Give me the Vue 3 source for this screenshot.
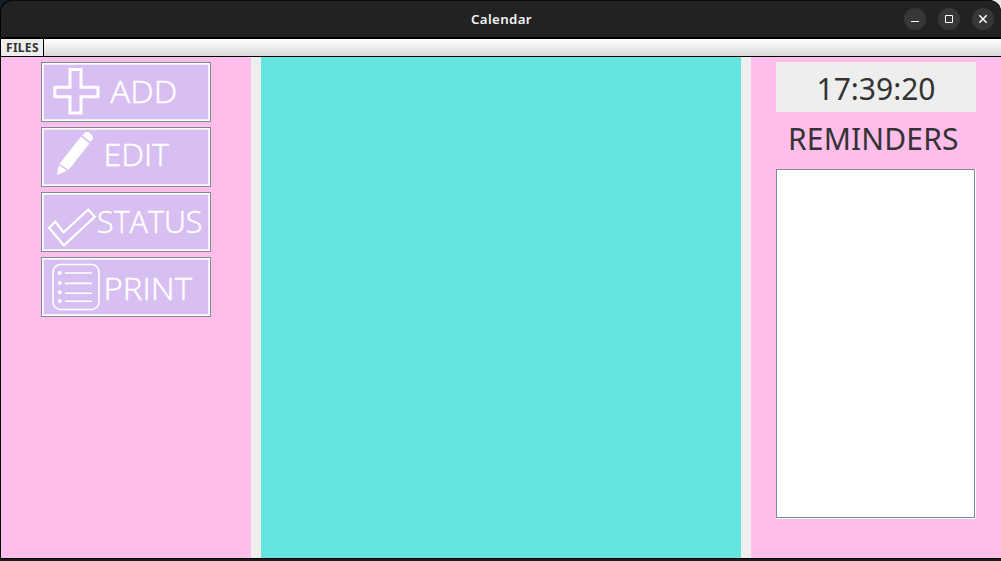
<script setup>
const buttons = [
  { name: 'add', label: 'ADD', x: 69.3, y: 40.5, width: 67 },
  { name: 'edit', label: 'EDIT', x: 62.5, y: 39, width: 65.5 },
  { name: 'status', label: 'STATUS', x: 56, y: 41, width: 105.5 },
  { name: 'print', label: 'PRINT', x: 62.5, y: 42.7, width: 88.5 },
]
</script>

<template>
  <div class="desktop">
    <div class="window">
      <header class="titlebar">
        <span class="side"></span>
        <h1>Calendar</h1>
        <div class="side controls">
          <span class="control"><svg viewBox="0 0 22 22"><path d="M7 13.5h8" /></svg></span>
          <span class="control"><svg viewBox="0 0 22 22"><path d="M7.5 7.5h7v7h-7z" /></svg></span>
          <span class="control"><svg viewBox="0 0 22 22"><path class="cross" d="M7.3 7.3l7.4 7.4M14.7 7.3l-7.4 7.4" /></svg></span>
        </div>
      </header>
      <nav class="menubar"><span class="menu">FILES</span></nav>
      <main>
        <aside class="actions">
          <button v-for="b in buttons" :key="b.name" type="button">
            <svg viewBox="0 0 170 60">
              <path v-if="b.name === 'add'" class="plus" d="M29 7.5h11v17.8h17v9.4h-17v16.3h-11v-16.3h-15.2v-9.4h15.2z" />
              <g v-else-if="b.name === 'edit'" class="solid">
                <path d="M40 9.5L48.5 16.5L27.5 43L18.5 36.7z" />
                <path d="M41.3 8.3L44 5.8Q45.8 4.4 48 5.6L51 8Q52.8 9.7 51.8 11.9L49.5 15z" />
                <path d="M18 38L26 43.7L19.5 46.6L16 48L16.6 44z" />
              </g>
              <path v-else-if="b.name === 'status'" class="check" d="M8 35.8L14.4 29.7L22.6 40.4L47.2 17.7L53.8 24.8L23 53.4z" />
              <g v-else class="list">
                <rect x="12" y="7.5" width="46" height="45" rx="7.5" />
                <path d="M24 16h27M24 26.4h27M24 36.3h27M24 44.3h27" />
                <circle v-for="y in [16, 26, 35.3, 44]" :key="y" cx="18.8" :cy="y" r="2" />
              </g>
              <text :x="b.x" :y="b.y" :textLength="b.width" lengthAdjust="spacingAndGlyphs">{{ b.label }}</text>
            </svg>
          </button>
        </aside>
        <section class="calendar"></section>
        <aside class="reminders">
          <time>17:39:20</time>
          <h2>REMINDERS</h2>
          <div class="list-frame"><div class="list-box"></div></div>
        </aside>
      </main>
    </div>
  </div>
</template>

<style>
body { margin: 0; overflow: hidden; }
</style>

<style scoped>
* { box-sizing: border-box; }
.desktop {
  width: 1001px;
  height: 561px;
  background: linear-gradient(90deg, #182027 0 50%, #e9e9e9 98%) top / 100% 20px no-repeat, #1c1b22;
  font-family: "Noto Sans", "Open Sans", sans-serif;
}
.window {
  height: 559px;
  display: flex;
  flex-direction: column;
  background: #000;
  border-left: 1px solid #000;
  border-bottom: 1px solid #000;
  border-radius: 12px 12px 0 0;
}
.titlebar {
  height: 37px;
  margin-bottom: 2px;
  display: flex;
  align-items: center;
  background: #222;
  border-top: 1px solid #0b0c10;
  border-radius: 12px 12px 0 0;
}
h1 {
  margin: 0;
  padding-left: 8px;
  font: 600 13.3px/20px "Noto Sans", "Open Sans", sans-serif;
  letter-spacing: 0.35px;
  color: #f4f4f4;
}
.side { flex: 1; }
.controls {
  display: flex;
  justify-content: flex-end;
  gap: 12px;
  padding-right: 7px;
}
.control {
  width: 22px;
  height: 22px;
  border-radius: 50%;
  background: #373737;
}
.control svg { display: block; width: 22px; height: 22px; }
.control path { fill: none; stroke: #fff; stroke-width: 1; }
.control .cross { stroke-width: 1.5; }
.menubar {
  height: 18px;
  padding-left: 1px;
  display: flex;
  background: linear-gradient(#fff, #dadada);
  border-bottom: 1px solid #000;
}
.menu {
  width: 42px;
  padding-left: 4px;
  background: #eee;
  border-right: 1px solid #000;
  font-size: 12px;
  font-weight: 700;
  letter-spacing: 0.3px;
  line-height: 17px;
  color: #333;
}
main {
  flex: 1;
  display: grid;
  grid-template-columns: 250px 480px 250px;
  column-gap: 10px;
  background: #eee;
}
.actions, .reminders {
  display: flex;
  flex-direction: column;
  align-items: center;
  padding-top: 5px;
  background: #ffbdea;
}
.actions { gap: 5px; }
.calendar { background: #64e4df; }
button {
  width: 170px;
  height: 60px;
  padding: 0;
  border: 1px solid #7a8a99;
  background: #d8bff2;
  box-shadow: inset 0 0 0 1px #fff, inset 0 0 0 2px #f3ebfb;
}
button svg { display: block; width: 170px; height: 60px; margin: -1px; }
button text {
  font: 300 31px "Open Sans", "Noto Sans", sans-serif;
  fill: #fff;
  stroke: #fff;
  stroke-width: 0.45;
}
.plus, .check { fill: none; stroke: #fff; stroke-width: 3; }
.check { stroke-width: 2.3; }
.solid { fill: #fff; }
.list { fill: none; stroke: #fff; stroke-width: 1.6; }
.list circle { fill: #fff; stroke: none; }
time {
  width: 200px;
  height: 50px;
  background: #eee;
  color: #333;
  font-size: 30px;
  line-height: 54px;
  text-align: center;
}
h2 {
  margin: 5px 0 0;
  width: 176px;
  height: 52px;
  color: #333;
  font-size: 30px;
  font-weight: 400;
  letter-spacing: 0.15px;
  line-height: 44px;
  white-space: nowrap;
}
.list-frame {
  width: 200px;
  height: 350px;
  border: solid #fff;
  border-width: 0 1px 1px 0;
}
.list-box {
  height: 100%;
  background: #fff;
  border: 1px solid #7a8a99;
}
</style>
